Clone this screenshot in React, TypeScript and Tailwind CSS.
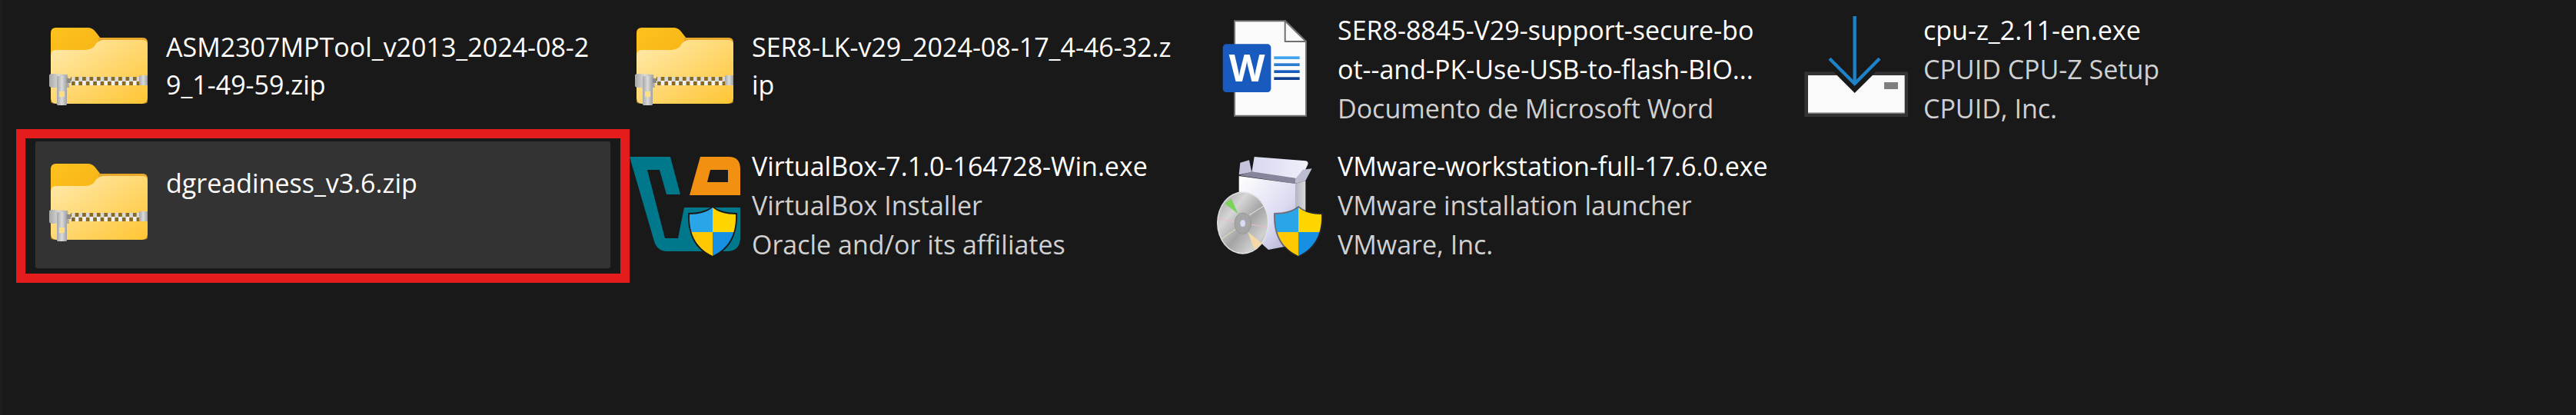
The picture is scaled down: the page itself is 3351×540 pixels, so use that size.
const font = { fontFamily: '"Open Sans", "Noto Sans", sans-serif' };

type FileItem = {
  name: string;
  details: string[];
  icon: React.ReactElement;
  selected?: boolean;
};

function Shield({ id }: { id: string }) {
  const outline =
    "M119 86 C126 92 137 95 149 95 C150 118 142 138 119 149 C96 138 88 118 89 95 C101 95 112 92 119 86 Z";
  return (
    <g>
      <clipPath id={id}>
        <path d={outline} />
      </clipPath>
      <g clipPath={`url(#${id})`}>
        <rect x="85" y="84" width="34" height="34" fill="#2AA6E8" />
        <rect x="119" y="84" width="34" height="34" fill="#FFD500" />
        <rect x="85" y="118" width="34" height="34" fill="#FFC800" />
        <rect x="119" y="118" width="34" height="34" fill="#1590E2" />
      </g>
    </g>
  );
}

function ZipIcon({ id }: { id: string }) {
  return (
    <svg width="171" height="165" viewBox="0 0 171 165">
      <defs>
        <linearGradient id={`${id}-tab`} x1="0" y1="0" x2="1" y2="1">
          <stop offset="0" stopColor="#FFC21E" />
          <stop offset="1" stopColor="#E9A40E" />
        </linearGradient>
        <linearGradient id={`${id}-front`} x1="0" y1="0" x2="1" y2="1">
          <stop offset="0" stopColor="#FFEBB0" />
          <stop offset="1" stopColor="#FFC533" />
        </linearGradient>
        <linearGradient id={`${id}-metal`} x1="0" y1="0" x2="1" y2="0">
          <stop offset="0" stopColor="#A8A8A8" />
          <stop offset="0.5" stopColor="#DADADA" />
          <stop offset="1" stopColor="#A0A0A0" />
        </linearGradient>
        <pattern id={`${id}-teeth`} width="9.4" height="11" patternUnits="userSpaceOnUse" x="0" y="93">
          <rect width="9.4" height="11" fill="#8A6A1E" />
          <rect x="0" y="0" width="4.7" height="6" fill="#D8D8D8" />
          <rect x="4.7" y="5" width="4.7" height="6" fill="#F0F0F0" />
        </pattern>
      </defs>
      <path
        d="M20 36 Q20 29 27 29 L68 29 Q74 29 78 34 L85 43 L140 43 Q146 43 146 50 L146 120 L20 120 Z"
        fill={`url(#${id}-tab)`}
      />
      <path d="M82 42 L140 42 Q146 42 146 49 L146 60 L82 60 Z" fill="#E8A92A" />
      <path
        d="M20 65 Q20 58 27 58 L64 58 Q71 58 76 54 Q80 46 88 45 L140 45 Q146 45 146 52 L146 121 Q146 128 139 128 L27 128 Q20 128 20 121 Z"
        fill={`url(#${id}-front)`}
      />
      <path d="M20 122 Q20 128 27 128 L139 128 Q146 128 146 122 L146 125 Q146 128 139 128 L27 128 Q20 128 20 125 Z" fill="#DE9F1E" />
      <rect x="46" y="93" width="92" height="11" fill={`url(#${id}-teeth)`} />
      <rect x="135" y="91" width="11" height="13" rx="1" fill={`url(#${id}-metal)`} />
      <path d="M18 91 Q18 89 22 89 L42 90 L44 107 L22 107 Q18 107 18 104 Z" fill={`url(#${id}-metal)`} />
      <rect x="32" y="95" width="14" height="6" fill="#8A8A8A" />
      <rect x="28" y="92" width="13" height="38" rx="1.5" fill={`url(#${id}-metal)`} />
      <rect x="31" y="112" width="7" height="7" fill="#FFE080" />
    </svg>
  );
}

function WordIcon() {
  return (
    <svg width="171" height="165" viewBox="0 0 171 165">
      <g transform="translate(0 13) scale(0.33333)">
        <path d="M108 22 L305 22 L387 102 L387 392 L108 392 Z" fill="#FAFAFA" stroke="#707070" strokeWidth="6" />
        <path d="M305 22 L305 102 L387 102 Z" fill="#FAFAFA" stroke="#707070" strokeWidth="6" strokeLinejoin="round" />
        <rect x="262" y="160" width="100" height="11" fill="#41A5EE" />
        <rect x="262" y="187" width="100" height="11" fill="#2B7CD3" />
        <rect x="262" y="214" width="100" height="11" fill="#185ABD" />
        <rect x="262" y="241" width="100" height="11" fill="#103F91" />
        <rect x="62" y="112" width="188" height="188" rx="14" fill="#185ABD" />
        <text x="156" y="258" textAnchor="middle" fill="#FFFFFF" fontSize="145" fontWeight="700" fontFamily="Open Sans, sans-serif">W</text>
      </g>
    </svg>
  );
}

function SetupIcon() {
  return (
    <svg width="171" height="165" viewBox="0 0 171 165">
      <g transform="translate(-2 3) scale(0.33333)">
        <rect x="52" y="250" width="404" height="176" fill="#333333" />
        <rect x="66" y="264" width="377" height="148" fill="#FAFAFA" />
        <rect x="66" y="409" width="377" height="3" fill="#8C8C8C" />
        <path d="M165 250 L248 333 L332 250 Z" fill="#191919" />
        <rect x="363" y="291" width="54" height="27" fill="#7F7F7F" />
        <path d="M248 33 L248 296" stroke="#1E82C8" strokeWidth="13" fill="none" />
        <path d="M150 199 L248 297 L345 199" stroke="#1E82C8" strokeWidth="13" fill="none" />
      </g>
    </svg>
  );
}

function VirtualBoxIcon() {
  return (
    <svg width="171" height="165" viewBox="0 0 171 165">
      <path
        d="M11 20 L64 20 L77 69 L59 69 L50 37 L34 37 L57 126 L74 126 L82 86 L155 86 L155 125 Q155 143 137 143 L60 143 Q47 143 43 130 Z"
        fill="#00788B"
      />
      <path
        d="M103 20 L140 20 Q155 20 155 36 L155 70 L89 70 Z M116 37 L112 53 L139 53 L139 37 Z"
        fill="#F29111"
        fillRule="evenodd"
      />
      <path d="M119 84 C126 90 137 93 151 93 C152 118 144 140 119 151 C94 140 86 118 87 93 C101 93 112 90 119 84 Z" fill="#191919" />
      <Shield id="vbox-shield" />
    </svg>
  );
}

function InstallerIcon() {
  return (
    <svg width="171" height="165" viewBox="0 0 171 165">
      <defs>
        <linearGradient id="box-front" x1="0" y1="0" x2="1" y2="1">
          <stop offset="0" stopColor="#FFFFFF" />
          <stop offset="0.6" stopColor="#DCDCF2" />
          <stop offset="1" stopColor="#A9A9CC" />
        </linearGradient>
        <linearGradient id="box-lid" x1="0" y1="0" x2="1" y2="0">
          <stop offset="0" stopColor="#D8D8F0" />
          <stop offset="1" stopColor="#F0F0FA" />
        </linearGradient>
        <linearGradient id="box-side" x1="0" y1="0" x2="1" y2="0">
          <stop offset="0" stopColor="#B4B4BE" />
          <stop offset="1" stopColor="#D8D8DE" />
        </linearGradient>
        <linearGradient id="disc" x1="0" y1="0" x2="1" y2="1">
          <stop offset="0" stopColor="#9C9C9C" />
          <stop offset="0.3" stopColor="#D6D6D6" />
          <stop offset="0.55" stopColor="#A4A4A4" />
          <stop offset="0.8" stopColor="#D0D0D0" />
          <stop offset="1" stopColor="#9A9A9A" />
        </linearGradient>
      </defs>
      <g transform="translate(0 6) scale(0.33333)">
        <path d="M185 42 L385 58 Q397 60 394 72 L375 112 L345 128 L175 102 Z" fill="url(#box-lid)" />
        <path d="M130 65 L165 55 L175 102 L125 112 Z" fill="#C4C4DC" />
        <path d="M125 115 L175 100 L345 125 L345 147 Z" fill="#85859C" />
        <path d="M345 128 L375 92 L410 88 L385 135 L345 147 Z" fill="#BCBCD0" />
        <path d="M345 147 L385 135 L385 370 L345 385 Z" fill="url(#box-side)" />
        <path d="M125 117 L345 147 L345 385 L240 405 L125 300 Z" fill="url(#box-front)" />
        <ellipse cx="140" cy="300" rx="101" ry="122" fill="#E4E4E4" />
        <ellipse cx="140" cy="300" rx="97" ry="118" fill="url(#disc)" />
        <path d="M122 265 L70 225 L95 205 Z" fill="#7BD45C" />
        <path d="M160 335 L215 380 L185 405 Z" fill="#F4D8A8" />
        <path d="M42 282 L108 296" stroke="#F0B8D0" strokeWidth="3" />
        <path d="M172 306 L238 318" stroke="#F0B8D0" strokeWidth="3" />
        <path d="M165 270 L225 232" stroke="#E8E8E8" strokeWidth="3" />
        <path d="M112 325 L58 362" stroke="#DCE8B0" strokeWidth="3" />
        <ellipse cx="140" cy="302" rx="32" ry="41" fill="#A6A6A6" stroke="#8C8C8C" strokeWidth="2" />
        <ellipse cx="140" cy="302" rx="10" ry="13" fill="#DADAF8" />
      </g>
      <path d="M119 84 C126 90 137 93 151 93 C152 118 144 140 119 151 C94 140 86 118 87 93 C101 93 112 90 119 84 Z" fill="#2A2A34" opacity="0.6" />
      <Shield id="vmware-shield" />
    </svg>
  );
}

const files: FileItem[] = [
  { name: "ASM2307MPTool_v2013_2024-08-2\n9_1-49-59.zip", details: [], icon: <ZipIcon id="zip-a" /> },
  { name: "SER8-LK-v29_2024-08-17_4-46-32.z\nip", details: [], icon: <ZipIcon id="zip-b" /> },
  {
    name: "SER8-8845-V29-support-secure-bo\not--and-PK-Use-USB-to-flash-BIO...",
    details: ["Documento de Microsoft Word"],
    icon: <WordIcon />,
  },
  { name: "cpu-z_2.11-en.exe", details: ["CPUID CPU-Z Setup", "CPUID, Inc."], icon: <SetupIcon /> },
  { name: "dgreadiness_v3.6.zip", details: [], icon: <ZipIcon id="zip-c" />, selected: true },
  {
    name: "VirtualBox-7.1.0-164728-Win.exe",
    details: ["VirtualBox Installer", "Oracle and/or its affiliates"],
    icon: <VirtualBoxIcon />,
  },
  {
    name: "VMware-workstation-full-17.6.0.exe",
    details: ["VMware installation launcher", "VMware, Inc."],
    icon: <InstallerIcon />,
  },
];

function FileTile({ file }: { file: FileItem }) {
  const lines = file.name.split("\n");
  const compact = file.details.length === 0;
  return (
    <div
      className={`flex h-[165px] w-[748px] rounded-[2px] ${
        file.selected ? "bg-[#333333]" : ""
      }`}
    >
      <div className="w-[170px] shrink-0">{file.icon}</div>
      <div
        className={`flex flex-col whitespace-nowrap text-[34px] ${
          compact ? "pt-[30px] leading-[49px]" : "pt-[7px] leading-[51px]"
        }`}
      >
        {lines.map((line) => (
          <div key={line} className="text-white">
            {line}
          </div>
        ))}
        {file.details.map((line) => (
          <div key={line} className="text-[#D0D0D0]">
            {line}
          </div>
        ))}
      </div>
    </div>
  );
}

export default function App() {
  return (
    <div
      className="relative h-[540px] w-[3351px] overflow-hidden border-l-[3px] border-[#1D1D1D] bg-[#191919]"
      style={font}
    >
      <div className="grid grid-cols-[repeat(4,748px)] gap-x-[14px] gap-y-3 pl-[43px] pt-[7px]">
        {files.map((file) => (
          <FileTile key={file.name} file={file} />
        ))}
      </div>
      {/* red annotation box drawn over the screenshot */}
      <div className="pointer-events-none absolute left-[18px] top-[168px] h-[200px] w-[798px] border-[12px] border-[#E51C1C]" />
    </div>
  );
}
